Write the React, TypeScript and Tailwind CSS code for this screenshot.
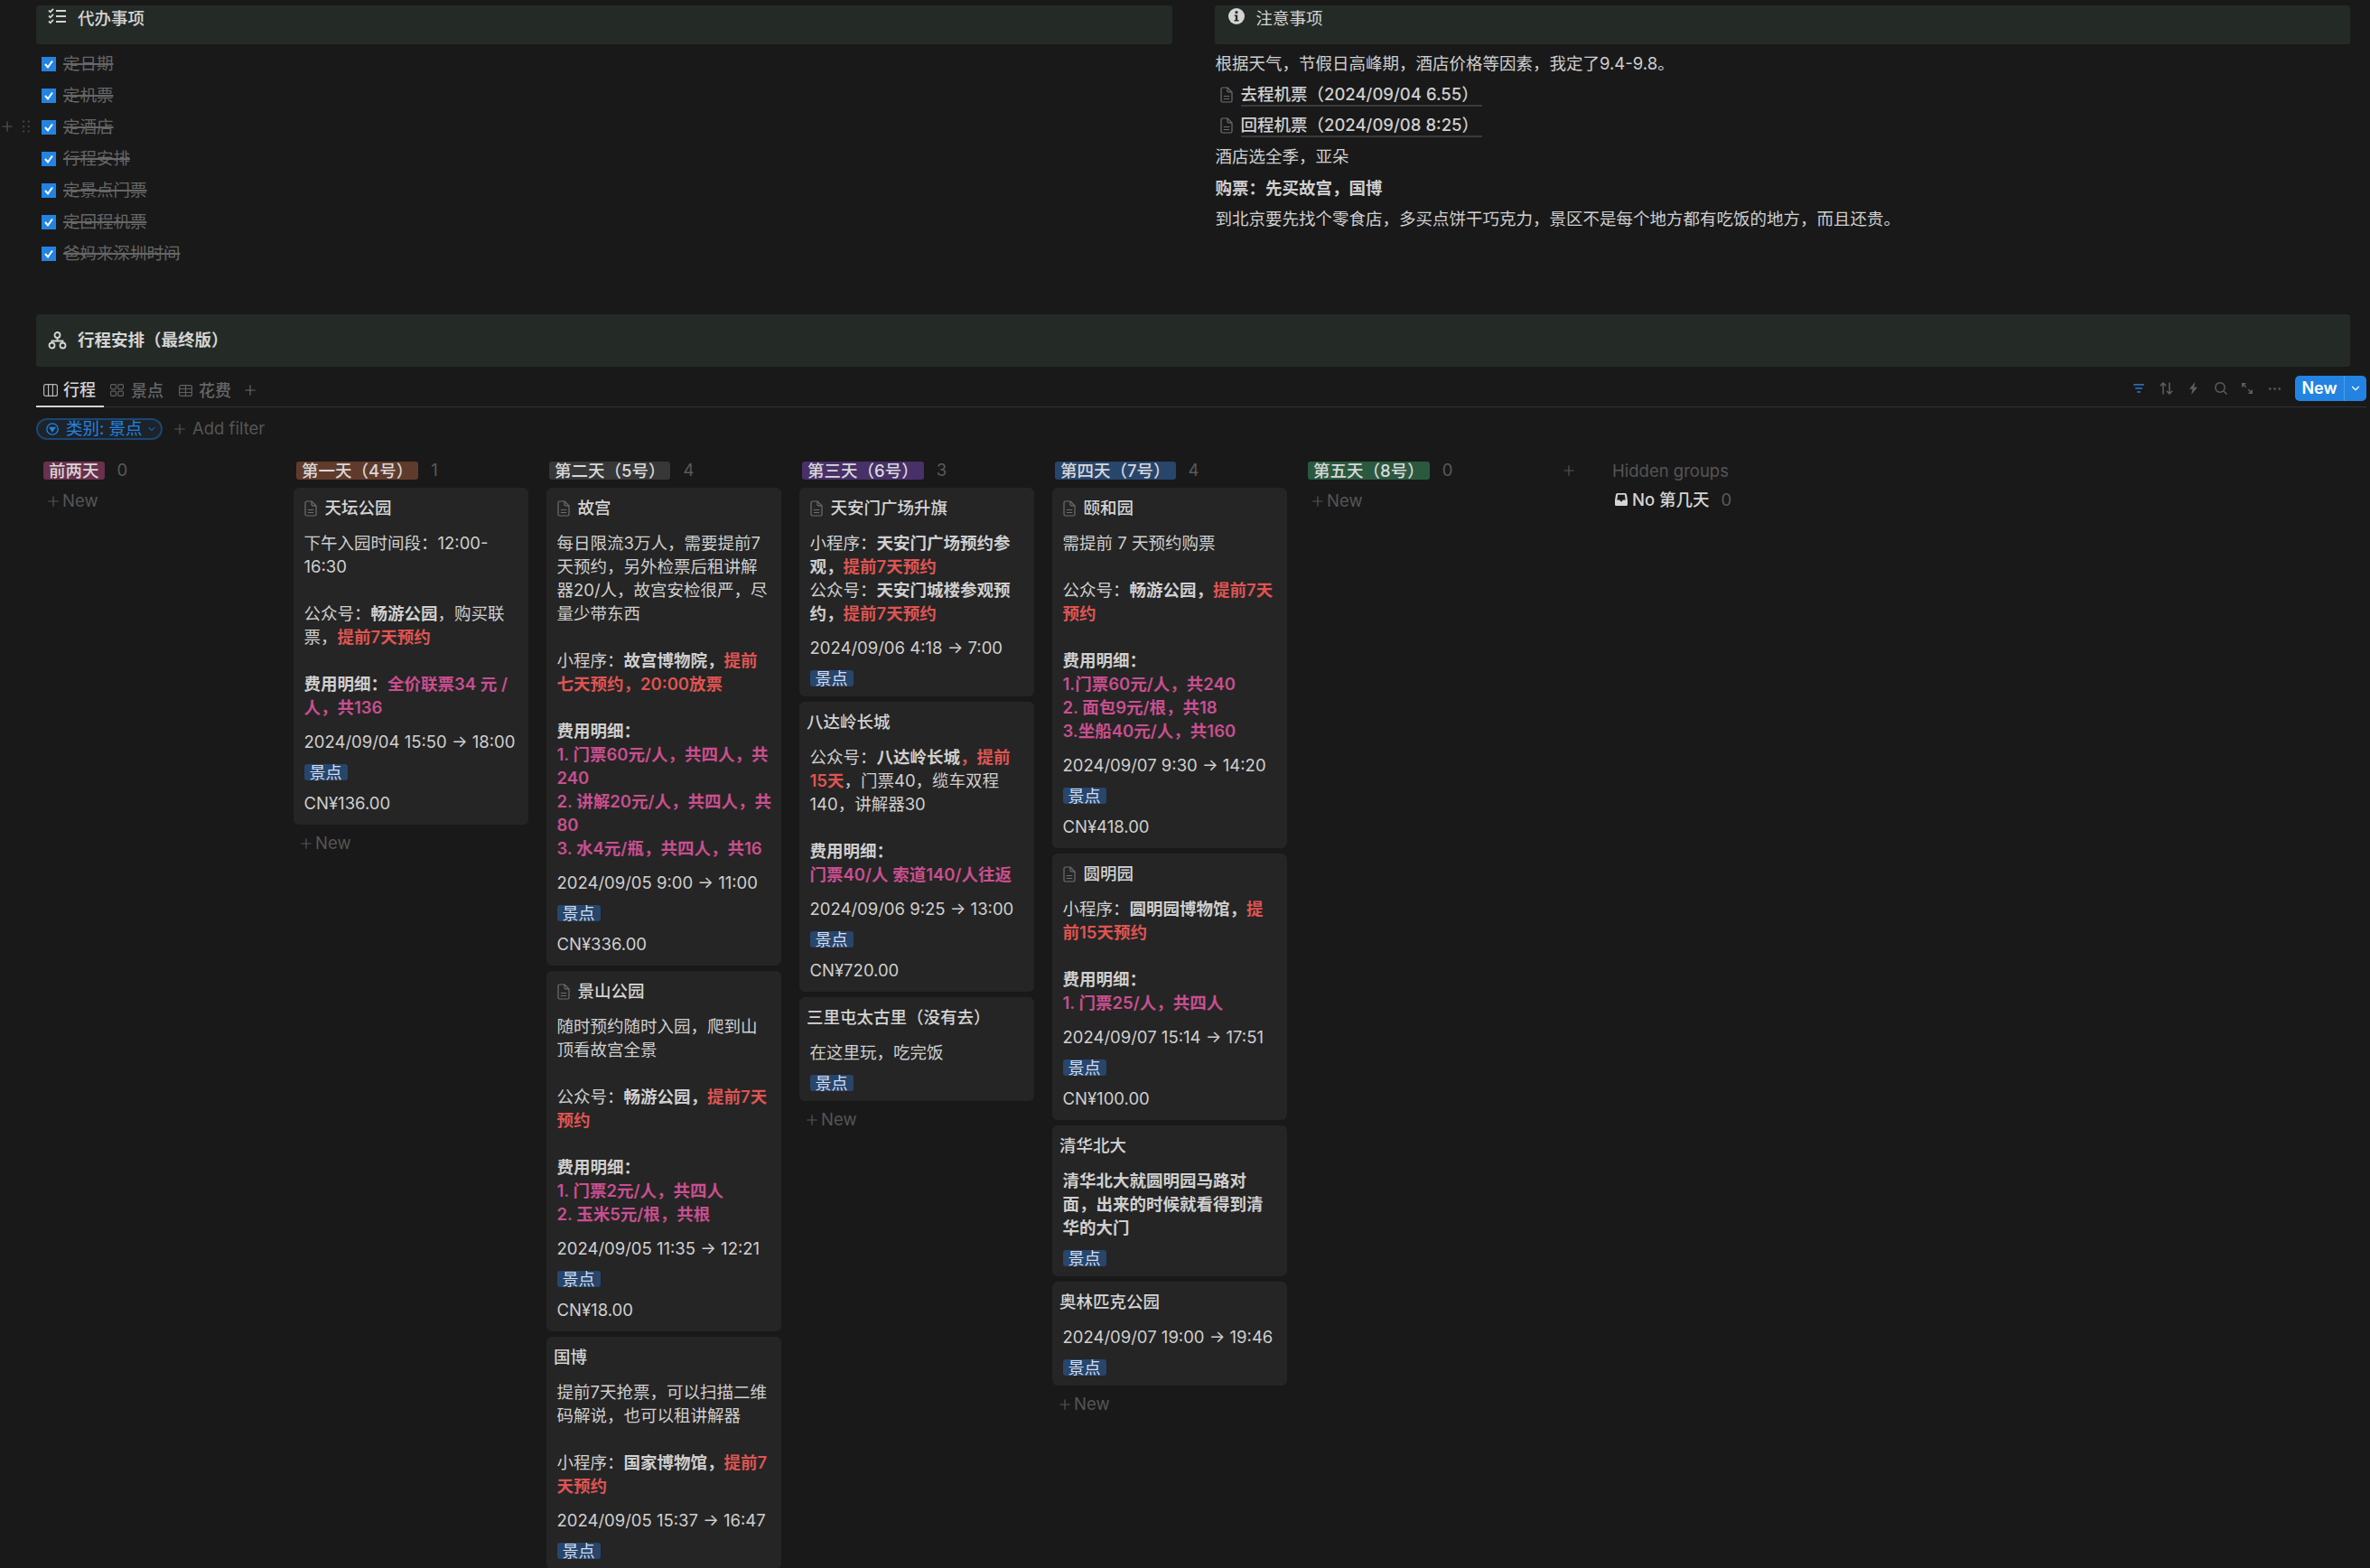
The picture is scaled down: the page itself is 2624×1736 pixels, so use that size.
import type { ReactNode } from "react";
import { ChevronDown, Plus } from "lucide-react";

const B = ({ children }: { children: ReactNode }) => <span className="font-semibold">{children}</span>;
const R = ({ children }: { children: ReactNode }) => <span className="font-semibold text-[#df5452]">{children}</span>;
const P = ({ children }: { children: ReactNode }) => <span className="font-semibold text-[#c94f8f]">{children}</span>;

const DocIcon = ({ className = "" }: { className?: string }) => (
  <svg viewBox="0 0 14 18" className={`h-[18px] w-[14px] shrink-0 ${className}`} fill="none" stroke="#6e6e6e" strokeWidth="1.2">
    <path d="M2.5 1h5.6L13 5.9v9.6a1.5 1.5 0 0 1-1.5 1.5h-9A1.5 1.5 0 0 1 1 15.500v-13A1.500 1.500 0 0 1 2.500 1Z" />
    <path d="M8 1v3.600a1.300 1.300 0 0 0 1.300 1.300H13M3.800 10.500h6.400M3.800 13.500h6.400" />
  </svg>
);

const ChecklistIcon = () => (
  <svg viewBox="0 0 20 18" className="h-[18px] w-[20px]" fill="none" stroke="#d4d4d4" strokeWidth="1.8">
    <path d="M1 2.500 2.800 4.300 6 .8M1 8.500 2.800 10.300 6 6.800M1 14.500 2.800 16.300 6 12.800M9 3h11M9 9h11M9 15h11" />
  </svg>
);

const InfoIcon = () => (
  <svg viewBox="0 0 18 18" className="h-[18px] w-[18px]">
    <circle cx="9" cy="9" r="9" fill="#d4d4d4" />
    <circle cx="9" cy="4.600" r="1.600" fill="#242b27" />
    <path d="M6.800 7.500h3.400v5.500h1.300v1.500h-5v-1.500h1.400v-4H6.800Z" fill="#242b27" />
  </svg>
);

const OrgIcon = () => (
  <svg viewBox="0 0 21 20" className="h-[20px] w-[21px]" fill="none" stroke="#d4d4d4" strokeWidth="1.800">
    <circle cx="10.500" cy="4" r="3" />
    <circle cx="4.500" cy="15.500" r="3" />
    <circle cx="16.500" cy="15.500" r="3" />
    <path d="M10.500 7v3.500M4.500 12.500v-2h12v2" />
  </svg>
);

const BoardIcon = () => (
  <svg viewBox="0 0 16 14" className="h-[14px] w-[16px]" fill="none" stroke="#b5b5b5" strokeWidth="1.200">
    <rect x=".6" y=".6" width="14.800" height="12.800" rx="2" />
    <path d="M5.600 .6v12.800M10.400 .6v12.800" />
  </svg>
);

const GalleryIcon = () => (
  <svg viewBox="0 0 15 14" className="h-[14px] w-[15px]" fill="none" stroke="#5f5f5f" strokeWidth="1.200">
    <rect x=".6" y=".6" width="5.800" height="5.200" rx="1.200" />
    <rect x="8.600" y=".6" width="5.800" height="5.200" rx="1.200" />
    <rect x=".6" y="8.200" width="5.800" height="5.200" rx="1.200" />
    <rect x="8.600" y="8.200" width="5.800" height="5.200" rx="1.200" />
  </svg>
);

const TableIcon = () => (
  <svg viewBox="0 0 15 13" className="h-[13px] w-[15px]" fill="none" stroke="#5f5f5f" strokeWidth="1.200">
    <rect x=".6" y=".6" width="13.800" height="11.800" rx="2" />
    <path d="M.6 4.500h13.800M.6 8.500h13.800M7.500 .6v11.800" />
  </svg>
);

const Toolbar = () => (
  <div className="flex h-[37px] items-start pt-[3px]">
    <div className="flex h-[28px] items-center">
      <svg viewBox="0 0 12 10" className="h-[10px] w-[12px]" fill="#2a6cb5">
        <rect width="12" height="1.800" rx=".4" />
        <rect x="2" y="4" width="8" height="1.800" rx=".4" />
        <rect x="4" y="8" width="4" height="1.800" rx=".4" />
      </svg>
      <svg viewBox="0 0 15 14" className="ml-[17px] h-[14px] w-[15px]" fill="none" stroke="#5f5f5f" strokeWidth="1.500">
        <path d="M4 13.500V1M.8 4.200 4 1l3.200 3.200M11 .5V13M7.800 9.800 11 13l3.200-3.200" />
      </svg>
      <svg viewBox="0 0 9 14" className="ml-[18px] h-[14px] w-[9px]" fill="#5f5f5f">
        <path d="M6.300 0 0 7.800h3.500L2.200 14 9 5.800H5.200Z" />
      </svg>
      <svg viewBox="0 0 14 14" className="ml-[19px] h-[14px] w-[14px]" fill="none" stroke="#5f5f5f" strokeWidth="1.400">
        <circle cx="6" cy="6" r="5.200" />
        <path d="m9.800 9.800 3.700 3.700" />
      </svg>
      <svg viewBox="0 0 12 12" className="ml-[16px] h-[12px] w-[12px]" fill="none" stroke="#5f5f5f" strokeWidth="1.400">
        <path d="M.7 4.500V.7h3.800M.7 .7l4 4M11.300 7.500v3.800H7.500M11.300 11.300l-4-4" />
      </svg>
      <svg viewBox="0 0 13 3" className="ml-[18px] h-[3px] w-[13px]" fill="#5f5f5f">
        <circle cx="1.300" cy="1.500" r="1.200" />
        <circle cx="6.500" cy="1.500" r="1.200" />
        <circle cx="11.700" cy="1.500" r="1.200" />
      </svg>
      <div className="ml-[16px] flex h-[28px] w-[79px] items-center rounded-[5px] bg-[#2383e2] text-white">
        <span className="w-[55px] border-r border-[#4b9bea] text-center text-[18px] leading-[28px] font-semibold">New</span>
        <ChevronDown className="ml-[5px] h-[14px] w-[14px]" strokeWidth={2} />
      </div>
    </div>
  </div>
);

const todos = ["定日期", "定机票", "定酒店", "行程安排", "定景点门票", "定回程机票", "爸妈来深圳时间"];

const TodoRow = ({ text, hovered }: { text: string; hovered?: boolean }) => (
  <div className="relative flex h-[35px] items-center pl-[6px]">
    {hovered && (
      <div className="absolute top-[8px] left-[-41px] flex items-center text-[#555]">
        <Plus className="h-[18px] w-[18px]" strokeWidth={1.600} />
        <svg viewBox="0 0 8 14" className="ml-[8px] h-[14px] w-[8px]" fill="#4b4b4b">
          <circle cx="1.200" cy="1.500" r="1.100" />
          <circle cx="6.800" cy="1.500" r="1.100" />
          <circle cx="1.200" cy="7" r="1.100" />
          <circle cx="6.800" cy="7" r="1.100" />
          <circle cx="1.200" cy="12.500" r="1.100" />
          <circle cx="6.800" cy="12.500" r="1.100" />
        </svg>
      </div>
    )}
    <div className="flex h-[16px] w-[16px] items-center justify-center bg-[#2383e2]">
      <svg viewBox="0 0 12 12" className="h-[12px] w-[12px]" fill="none" stroke="#fff" strokeWidth="2">
        <path d="m2 6 3 3.500L10 2.500" />
      </svg>
    </div>
    <span className="ml-[8px] text-[#666] line-through decoration-[#666] decoration-2">{text}</span>
  </div>
);

type CardData = {
  title: string;
  doc?: boolean;
  lines?: ReactNode[];
  date?: string;
  price?: string;
};

const PlaceTag = () => (
  <div className="h-[18px] w-[48px] rounded-[3px] bg-[#28456c] pl-[6px] text-[18px] leading-[19px] text-[#d3dfee]">景点</div>
);

const Card = ({ title, doc, lines, date, price }: CardData) => (
  <div className="flex flex-col rounded-[6px] bg-[#252525] pt-[10px] pr-[4px] pb-[11px] pl-[11.500px] whitespace-nowrap text-[#cfcfcf]">
    <div className={`flex h-[26.500px] items-center font-medium text-[#d4d4d4] ${doc ? "" : "ml-[-3.500px]"}`}>
      {doc && <DocIcon className="mr-[9px]" />}
      {title}
    </div>
    <div className="mt-[11.500px] flex flex-col gap-[12px]">
      {lines && (
        <div className="leading-[26px]">
          {lines.map((line, i) => (
            <div key={i} className="h-[26px]">{line}</div>
          ))}
        </div>
      )}
      {date && <div className="leading-[26px]">{date}</div>}
      <PlaceTag />
      {price && <div className="leading-[26px]">{price}</div>}
    </div>
  </div>
);

const NewRow = () => (
  <div className="flex h-[30px] items-center pl-[5px] text-[#555]">
    <Plus className="h-[18px] w-[18px]" strokeWidth={1.600} />
    <span className="ml-[1px]">New</span>
  </div>
);

type Column = { label: string; color: string; count: number; cards: CardData[] };

const columns: Column[] = [
  { label: "前两天", color: "bg-[#69314c]", count: 0, cards: [] },
  {
    label: "第一天（4号）",
    color: "bg-[#603b2c]",
    count: 1,
    cards: [
      {
        title: "天坛公园",
        doc: true,
        lines: [
          "下午入园时间段：12:00-",
          "16:30",
          "",
          <>公众号：<B>畅游公园</B>，购买联</>,
          <>票，<R>提前7天预约</R></>,
          "",
          <><B>费用明细：</B><P>全价联票34 元 /</P></>,
          <P>人，共136</P>,
        ],
        date: "2024/09/04 15:50 → 18:00",
        price: "CN¥136.00",
      },
    ],
  },
  {
    label: "第二天（5号）",
    color: "bg-[#373737]",
    count: 4,
    cards: [
      {
        title: "故宫",
        doc: true,
        lines: [
          "每日限流3万人，需要提前7",
          "天预约，另外检票后租讲解",
          "器20/人，故宫安检很严，尽",
          "量少带东西",
          "",
          <>小程序：<B>故宫博物院，</B><R>提前</R></>,
          <R>七天预约，20:00放票</R>,
          "",
          <B>费用明细：</B>,
          <P>1. 门票60元/人，共四人，共</P>,
          <P>240</P>,
          <P>2. 讲解20元/人，共四人，共</P>,
          <P>80</P>,
          <P>3. 水4元/瓶，共四人，共16</P>,
        ],
        date: "2024/09/05 9:00 → 11:00",
        price: "CN¥336.00",
      },
      {
        title: "景山公园",
        doc: true,
        lines: [
          "随时预约随时入园，爬到山",
          "顶看故宫全景",
          "",
          <>公众号：<B>畅游公园，</B><R>提前7天</R></>,
          <R>预约</R>,
          "",
          <B>费用明细：</B>,
          <P>1. 门票2元/人，共四人</P>,
          <P>2. 玉米5元/根，共根</P>,
        ],
        date: "2024/09/05 11:35 → 12:21",
        price: "CN¥18.00",
      },
      {
        title: "国博",
        lines: [
          "提前7天抢票，可以扫描二维",
          "码解说，也可以租讲解器",
          "",
          <>小程序：<B>国家博物馆，</B><R>提前7</R></>,
          <R>天预约</R>,
        ],
        date: "2024/09/05 15:37 → 16:47",
      },
    ],
  },
  {
    label: "第三天（6号）",
    color: "bg-[#483069]",
    count: 3,
    cards: [
      {
        title: "天安门广场升旗",
        doc: true,
        lines: [
          <>小程序：<B>天安门广场预约参</B></>,
          <><B>观，</B><R>提前7天预约</R></>,
          <>公众号：<B>天安门城楼参观预</B></>,
          <><B>约，</B><R>提前7天预约</R></>,
        ],
        date: "2024/09/06 4:18 → 7:00",
      },
      {
        title: "八达岭长城",
        lines: [
          <>公众号：<B>八达岭长城</B><R>，提前</R></>,
          <><R>15天</R>，门票40，缆车双程</>,
          "140，讲解器30",
          "",
          <B>费用明细：</B>,
          <P>门票40/人 索道140/人往返</P>,
        ],
        date: "2024/09/06 9:25 → 13:00",
        price: "CN¥720.00",
      },
      {
        title: "三里屯太古里（没有去）",
        lines: ["在这里玩，吃完饭"],
      },
    ],
  },
  {
    label: "第四天（7号）",
    color: "bg-[#28456c]",
    count: 4,
    cards: [
      {
        title: "颐和园",
        doc: true,
        lines: [
          "需提前 7 天预约购票",
          "",
          <>公众号：<B>畅游公园，</B><R>提前7天</R></>,
          <R>预约</R>,
          "",
          <B>费用明细：</B>,
          <P>1.门票60元/人，共240</P>,
          <P>2. 面包9元/根，共18</P>,
          <P>3.坐船40元/人，共160</P>,
        ],
        date: "2024/09/07 9:30 → 14:20",
        price: "CN¥418.00",
      },
      {
        title: "圆明园",
        doc: true,
        lines: [
          <>小程序：<B>圆明园博物馆，</B><R>提</R></>,
          <R>前15天预约</R>,
          "",
          <B>费用明细：</B>,
          <P>1. 门票25/人，共四人</P>,
        ],
        date: "2024/09/07 15:14 → 17:51",
        price: "CN¥100.00",
      },
      {
        title: "清华北大",
        lines: [
          <B>清华北大就圆明园马路对</B>,
          <B>面，出来的时候就看得到清</B>,
          <B>华的大门</B>,
        ],
      },
      { title: "奥林匹克公园", date: "2024/09/07 19:00 → 19:46" },
    ],
  },
  { label: "第五天（8号）", color: "bg-[#2b593f]", count: 0, cards: [] },
];

const BoardColumn = ({ label, color, count, cards }: Column) => (
  <div className="w-[260px] shrink-0">
    <div className="mb-[9px] flex h-[20px] items-center pl-[3px]">
      <span className={`h-[20px] rounded-[3px] px-[6px] leading-[20px] font-medium whitespace-nowrap text-[#d8d8d8] ${color}`}>{label}</span>
      <span className="ml-[14px] text-[#5a5a5a]">{count}</span>
    </div>
    <div className="flex flex-col gap-[6px]">
      {cards.map((card) => (
        <Card key={card.title} {...card} />
      ))}
      <NewRow />
    </div>
  </div>
);

export default function App() {
  return (
    <div
      className="h-[1736px] overflow-hidden bg-[#191919] pt-[6px] pr-[4px] pl-[40px] text-[18.500px] text-[#cfcfcf]"
      style={{ fontFamily: 'Inter, "Noto Sans CJK SC", sans-serif' }}
    >
      {/* Top two columns */}
      <div className="flex gap-[47px] pr-[18px]">
        <div className="flex-1">
          <div className="flex h-[43px] items-start gap-[13px] rounded-[3px] bg-[#242b27] pt-[3px] pl-[13px] leading-[22px] font-medium text-[#d4d4d4]">
            <ChecklistIcon />
            <span>代办事项</span>
          </div>
          <div className="mt-[4px]">
            {todos.map((todo, i) => (
              <TodoRow key={todo} text={todo} hovered={i === 2} />
            ))}
          </div>
        </div>
        <div className="flex-1">
          <div className="flex h-[43px] items-start gap-[13px] rounded-[3px] bg-[#242b27] pt-[3px] pl-[15px] leading-[22px] text-[#d4d4d4]">
            <InfoIcon />
            <span>注意事项</span>
          </div>
          <div className="mt-[4px] pl-[1px] leading-[34.400px]">
            <div>根据天气，节假日高峰期，酒店价格等因素，我定了9.4-9.8。</div>
            {["去程机票（2024/09/04 6.55）", "回程机票（2024/09/08 8:25）"].map((ticket) => (
              <div key={ticket} className="flex h-[34.400px] items-center pl-[5px]">
                <DocIcon className="mr-[9px]" />
                <span className="h-[26px] border-b-2 border-[#3a3a3a] pr-[4px] leading-[24px] font-medium">{ticket}</span>
              </div>
            ))}
            <div>酒店选全季，亚朵</div>
            <div className="font-semibold">购票：先买故宫，国博</div>
            <div>到北京要先找个零食店，多买点饼干巧克力，景区不是每个地方都有吃饭的地方，而且还贵。</div>
          </div>
        </div>
      </div>

      {/* Section header */}
      <div className="mt-[50px] mr-[18px] flex h-[58px] items-center gap-[12px] rounded-[3px] bg-[#242b27] pl-[13px] font-semibold text-[#d4d4d4]">
        <OrgIcon />
        <span>行程安排（最终版）</span>
      </div>

      {/* Tabs */}
      <div className="flex h-[45px] items-end justify-between border-b border-[#2f2f2f]">
        <div className="flex items-end text-[18px]">
          <div className="mb-[-1px] flex h-[37px] w-[75px] items-center gap-[6px] border-b-2 border-[#d4d4d4] pl-[8px] font-medium text-[#d4d4d4]">
            <BoardIcon />
            <span>行程</span>
          </div>
          <div className="flex h-[36px] items-center gap-[8px] pr-[10px] pl-[7px] font-medium text-[#666]">
            <GalleryIcon />
            <span>景点</span>
          </div>
          <div className="flex h-[36px] items-center gap-[7px] pl-[7px] font-medium text-[#666]">
            <TableIcon />
            <span>花费</span>
          </div>
          <div className="flex h-[36px] items-center pl-[12px] text-[#666]">
            <Plus className="h-[18px] w-[18px]" strokeWidth={1.600} />
          </div>
        </div>
        <Toolbar />
      </div>

      {/* Filter row */}
      <div className="mt-[12px] flex h-[24px] items-center">
        <div className="flex h-[24px] w-[140px] items-center rounded-full border-2 border-[#1c4671] bg-[#1c232b] pl-[9px] text-[#2383e2]">
          <svg viewBox="0 0 14 14" className="h-[14px] w-[14px]" fill="none" stroke="#2383e2" strokeWidth="1.300">
            <circle cx="7" cy="7" r="6.200" />
            <path d="M4.200 5.500h5.600L7 9.500Z" fill="#2383e2" />
          </svg>
          <span className="ml-[8px] whitespace-nowrap">类别: 景点</span>
          <ChevronDown className="ml-[4px] h-[12px] w-[12px]" strokeWidth={2} />
        </div>
        <Plus className="ml-[10px] h-[18px] w-[18px] text-[#555]" strokeWidth={1.600} />
        <span className="ml-[5px] text-[#555]">Add filter</span>
      </div>

      {/* Board */}
      <div className="mt-[24px] flex gap-[20px] pl-[5px]">
        {columns.map((column) => (
          <BoardColumn key={column.label} {...column} />
        ))}
        <div className="flex h-[20px] w-[40px] shrink-0 items-center pl-[3px] text-[#555]">
          <Plus className="h-[18px] w-[18px]" strokeWidth={1.600} />
        </div>
        <div className="w-[220px] shrink-0 whitespace-nowrap">
          <div className="h-[20px] leading-[20px] text-[#555]">Hidden groups</div>
          <div className="mt-[12px] flex h-[20px] items-center pl-[3px] leading-[20px]">
            <svg viewBox="0 0 14 14" className="h-[14px] w-[14px]" fill="#d4d4d4">
              <path d="M3 0h8a2 2 0 0 1 2 1.700L14 8v4.500a1.500 1.500 0 0 1-1.500 1.500h-11A1.500 1.500 0 0 1 0 12.500V8l1-6.300A2 2 0 0 1 3 0Zm.2 1.800-.9 5.700h2.800L7 9.800l1.900-2.300h2.800l-.9-5.700Z" fillRule="evenodd" />
            </svg>
            <span className="ml-[5px] font-medium text-[#d4d4d4]">No 第几天</span>
            <span className="ml-[13px] text-[#5a5a5a]">0</span>
          </div>
        </div>
      </div>
    </div>
  );
}
